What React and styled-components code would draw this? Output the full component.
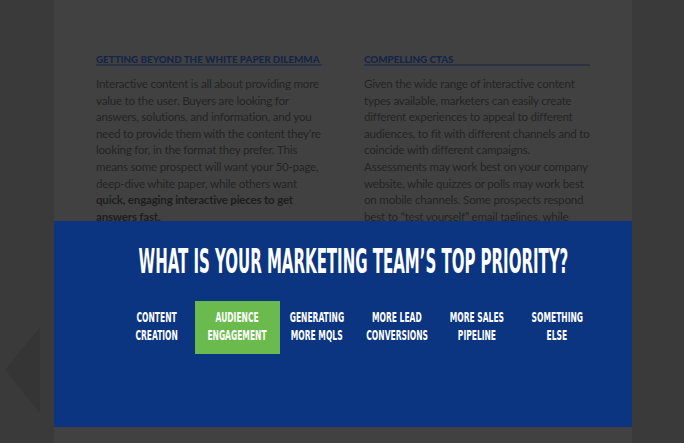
import React from "react";
import styled, { createGlobalStyle } from "styled-components";

const GlobalStyle = createGlobalStyle`
  html, body {
    margin: 0;
    padding: 0;
    background: #3a3a3a;
    overflow: hidden;
  }
`;

const Screen = styled.div`
  position: relative;
  width: 684px;
  height: 443px;
  overflow: hidden;
  background: #3a3a3a;
`;

const Page = styled.div`
  width: 578px;
  height: 443px;
  margin-left: 54px;
  background: #414141;
  padding: 55px 42px 0;
  box-sizing: border-box;
  display: grid;
  grid-template-columns: 226px 226px;
  column-gap: 42px;
  align-content: start;
`;

const Column = styled.div`
  display: flex;
  flex-direction: column;
`;

const SectionTitle = styled.h3`
  margin: 0;
  font-family: Lato, "Liberation Sans", sans-serif;
  font-weight: 900;
  font-size: 9.8px;
  line-height: 9px;
  color: #13254a;
  padding-bottom: 0;
  border-bottom: 2px solid #2b3244;
  white-space: nowrap;
`;

const Body = styled.p`
  margin: 10px 0 0;
  font-family: Lato, "Liberation Sans", sans-serif;
  font-size: 11.6px;
  letter-spacing: -0.22px;
  line-height: 16.6px;
  color: #242424;
  white-space: nowrap;

  strong {
    color: #1e1e1e;
    font-weight: 700;
  }
`;

const Arrow = styled.div`
  position: absolute;
  left: 5px;
  top: 327px;
  width: 0;
  height: 0;
  border-top: 43px solid transparent;
  border-bottom: 43px solid transparent;
  border-right: 35px solid #353535;
`;

const Modal = styled.div`
  position: absolute;
  left: 54px;
  top: 221px;
  width: 578px;
  height: 206px;
  background: #0b3580;
  display: flex;
  flex-direction: column;
  align-items: center;
  padding-top: 22px;
  box-sizing: border-box;
`;

const Question = styled.h2`
  margin: 0;
  width: 100%;
  padding-left: 20px;
  box-sizing: border-box;
  display: flex;
  justify-content: center;
  font-family: "DejaVu Sans Condensed", "DejaVu Sans", sans-serif;
  font-stretch: condensed;
  font-weight: 700;
  font-size: 34px;
  line-height: 36px;
  color: #ffffff;
  white-space: nowrap;
`;

const Squeeze = styled.span`
  display: inline-block;
  transform: scaleX(${(p) => p.$x});
  transform-origin: center;
`;

const Options = styled.div`
  display: flex;
  align-self: stretch;
  padding-left: 63px;
  margin-top: 22px;
`;

const Option = styled.button`
  width: ${(p) => (p.$active ? "85px" : "80px")};
  margin: ${(p) => (p.$active ? "0 -2.5px" : "0")};
  height: 53px;
  border: none;
  padding: 0 0 4px;
  box-sizing: border-box;
  background: ${(p) => (p.$active ? "#6bba4e" : "transparent")};
  color: #ffffff;
  font-family: "DejaVu Sans Condensed", "DejaVu Sans", sans-serif;
  font-stretch: condensed;
  font-weight: 700;
  font-size: 14.5px;
  line-height: 18px;
  display: flex;
  flex-direction: column;
  align-items: center;
  justify-content: center;
  white-space: nowrap;
  cursor: pointer;
`;

const options = [
  ["CONTENT", "CREATION"],
  ["AUDIENCE", "ENGAGEMENT"],
  ["GENERATING", "MORE MQLS"],
  ["MORE LEAD", "CONVERSIONS"],
  ["MORE SALES", "PIPELINE"],
  ["SOMETHING", "ELSE"],
];

export default function App() {
  return (
    <Screen>
      <GlobalStyle />
      <Page>
        <Column>
          <SectionTitle>GETTING BEYOND THE WHITE PAPER DILEMMA</SectionTitle>
          <Body>
            Interactive content is all about providing more
            <br />
            value to the user. Buyers are looking for
            <br />
            answers, solutions, and information, and you
            <br />
            need to provide them with the content they’re
            <br />
            looking for, in the format they prefer. This
            <br />
            means some prospect will want your 50-page,
            <br />
            deep-dive white paper, while others want
            <br />
            <strong>
              quick, engaging interactive pieces to get
              <br />
              answers fast.
            </strong>
          </Body>
        </Column>
        <Column>
          <SectionTitle>COMPELLING CTAS</SectionTitle>
          <Body>
            Given the wide range of interactive content
            <br />
            types available, marketers can easily create
            <br />
            different experiences to appeal to different
            <br />
            audiences, to fit with different channels and to
            <br />
            coincide with different campaigns.
            <br />
            Assessments may work best on your company
            <br />
            website, while quizzes or polls may work best
            <br />
            on mobile channels. Some prospects respond
            <br />
            best to “test yourself” email taglines, while
            <br />
            others respond to a calculator that shows
          </Body>
        </Column>
      </Page>
      <Arrow />
      <Modal>
        <Question>
          <Squeeze $x={0.49}>WHAT IS YOUR MARKETING TEAM’S TOP PRIORITY?</Squeeze>
        </Question>
        <Options>
          {options.map(([a, b], i) => (
            <Option key={a} $active={i === 1}>
              <Squeeze $x={0.58}>{a}</Squeeze>
              <Squeeze $x={0.58}>{b}</Squeeze>
            </Option>
          ))}
        </Options>
      </Modal>
    </Screen>
  );
}
